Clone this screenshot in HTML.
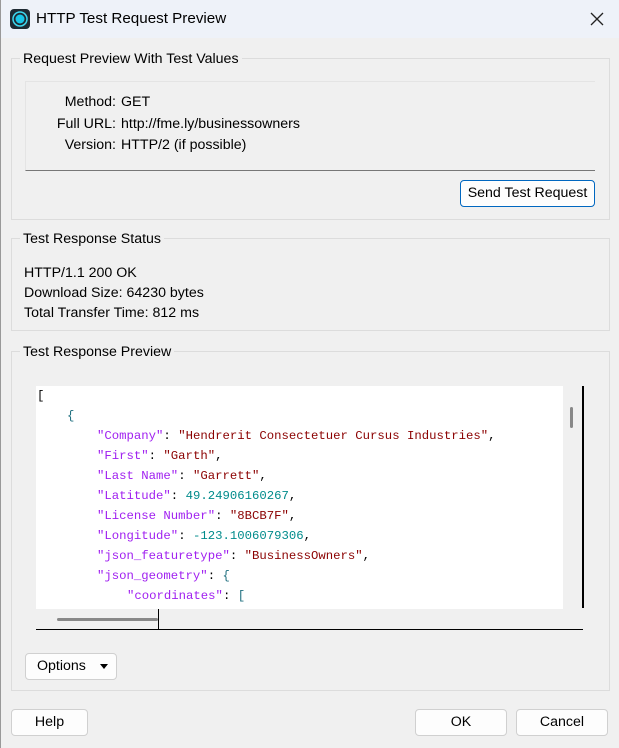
<!DOCTYPE html>
<html><head><meta charset="utf-8"><style>
*{margin:0;padding:0;box-sizing:border-box}
body{width:619px;height:748px;background:#f0f0f0;font-family:"Liberation Sans",sans-serif;font-size:14.2px;color:#000;position:relative;overflow:hidden}
.a{position:absolute}
.title{left:0;top:0;width:619px;height:38px;background:#eef2f9}
.grp{position:absolute;border:1px solid #dcdcdc}
.gt{position:absolute;background:#f0f0f0;padding:0 3px;line-height:16px}
.btn{position:absolute;background:#fdfdfd;border:1px solid #d0d0d0;border-radius:4px;text-align:center;line-height:25px}
.code{font-family:"Liberation Mono",monospace;font-size:12.3px;line-height:20px}
.code div{height:20px;white-space:pre}
.k{color:#a020f0}.s{color:#8b0000}.n{color:#008b8b}.p{color:#1f6f7f}
</style></head><body>
<div class="a title"></div>
<div class="a" style="left:0;top:0;width:1px;height:748px;background:#999"></div>
<svg class="a" style="left:10px;top:9px" width="20" height="20"><rect x="0" y="0" width="20" height="20" rx="4" fill="#1e2a33"/><circle cx="10" cy="10" r="7" fill="none" stroke="#3fd8f0" stroke-width="1.5"/><circle cx="10" cy="10" r="4.5" fill="#19c6e8"/></svg>
<div class="a" style="left:36px;top:10px;font-size:15.2px">HTTP Test Request Preview</div>
<svg class="a" style="left:590px;top:12px" width="14" height="14"><path d="M1 1L13 13M13 1L1 13" stroke="#222" stroke-width="1.3"/></svg>

<div class="grp" style="left:11px;top:58px;width:599px;height:162px"></div>
<div class="gt" style="left:20px;top:51px">Request Preview With Test Values</div>
<div class="a" style="left:25px;top:81px;width:570px;height:90px;border-top:1px solid #e4e4e4;border-left:1px solid #e4e4e4;border-bottom:1px solid #777"></div>
<div class="a" style="left:0;top:92px;width:116px;text-align:right;line-height:21.5px">Method:<br>Full URL:<br>Version:</div>
<div class="a" style="left:121px;top:92px;line-height:21.5px">GET<br>http://fme.ly/businessowners<br>HTTP/2 (if possible)</div>
<div class="btn" style="left:460px;top:180px;width:135px;height:27px;border:1px solid #0067c0;box-shadow:inset 0 0 0 1px #fff">Send Test Request</div>

<div class="grp" style="left:11px;top:238px;width:599px;height:93px"></div>
<div class="gt" style="left:20px;top:231px">Test Response Status</div>
<div class="a" style="left:24px;top:263px;line-height:20px">HTTP/1.1 200 OK<br>Download Size: 64230 bytes<br>Total Transfer Time: 812 ms</div>

<div class="grp" style="left:11px;top:351px;width:599px;height:340px"></div>
<div class="gt" style="left:20px;top:344px">Test Response Preview</div>
<div class="a" style="left:36px;top:386px;width:527px;height:223px;background:#fff;overflow:hidden">
<div class="code" style="position:absolute;left:0;top:0;width:600px"><div style="padding-left:1px">[</div><div style="padding-left:31px"><span class="p">{</span></div><div style="padding-left:61px"><span class="k">"Company"</span>: <span class="s">"Hendrerit Consectetuer Cursus Industries"</span>,</div><div style="padding-left:61px"><span class="k">"First"</span>: <span class="s">"Garth"</span>,</div><div style="padding-left:61px"><span class="k">"Last Name"</span>: <span class="s">"Garrett"</span>,</div><div style="padding-left:61px"><span class="k">"Latitude"</span>: <span class="n">49.24906160267</span>,</div><div style="padding-left:61px"><span class="k">"License Number"</span>: <span class="s">"8BCB7F"</span>,</div><div style="padding-left:61px"><span class="k">"Longitude"</span>: <span class="n">-123.1006079306</span>,</div><div style="padding-left:61px"><span class="k">"json_featuretype"</span>: <span class="s">"BusinessOwners"</span>,</div><div style="padding-left:61px"><span class="k">"json_geometry"</span>: <span class="p">{</span></div><div style="padding-left:91px"><span class="k">"coordinates"</span>: <span class="p">[</span></div></div></div>
<div class="a" style="left:570px;top:407px;width:3px;height:21px;background:#888;border-radius:2px"></div>
<div class="a" style="left:582px;top:386px;width:2px;height:222px;background:#000"></div>
<div class="a" style="left:57px;top:618px;width:101px;height:3px;background:#888;border-radius:2px"></div>
<div class="a" style="left:158px;top:609px;width:1px;height:21px;background:#000"></div>
<div class="a" style="left:36px;top:629px;width:547px;height:1px;background:#000"></div>

<div class="btn" style="left:25px;top:653px;width:92px;height:27px;text-align:left;padding-left:11px">Options<span style="position:absolute;left:74px;top:10px;border:4px solid transparent;border-top:5px solid #000;border-bottom:0"></span></div>

<div class="btn" style="left:11px;top:709px;width:77px;height:27px">Help</div>
<div class="btn" style="left:415px;top:709px;width:92px;height:27px">OK</div>
<div class="btn" style="left:516px;top:709px;width:92px;height:27px">Cancel</div>
</body></html>
